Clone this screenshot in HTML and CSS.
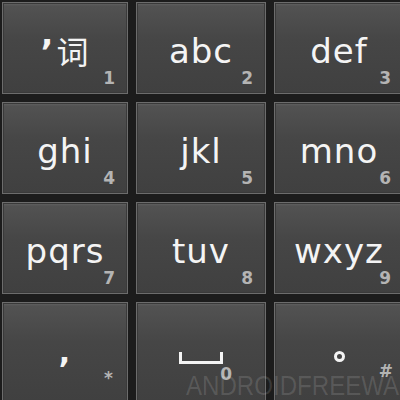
FILE: index.html
```html
<!DOCTYPE html>
<html>
<head>
<meta http-equiv="Content-Type" content="text/html; charset=utf-8"/>
<title>Keypad</title>
<link rel="stylesheet" href="styles.css">
</head>
<body>
<div class="pad">
  <div class="key"><span class="main"><span class="apos">’</span><span class="cjk">词</span></span><span class="num">1</span></div>
  <div class="key"><span class="main">abc</span><span class="num">2</span></div>
  <div class="key"><span class="main">def</span><span class="num">3</span></div>

  <div class="key"><span class="main">ghi</span><span class="num">4</span></div>
  <div class="key"><span class="main">jkl</span><span class="num">5</span></div>
  <div class="key"><span class="main">mno</span><span class="num">6</span></div>

  <div class="key"><span class="main">pqrs</span><span class="num">7</span></div>
  <div class="key"><span class="main">tuv</span><span class="num">8</span></div>
  <div class="key"><span class="main">wxyz</span><span class="num">9</span></div>

  <div class="key"><span class="main comma">,</span><span class="num star">*</span></div>
  <div class="key"><span class="space"></span><span class="num zero">0</span></div>
  <div class="key"><span class="dot"></span><span class="num hash">#</span></div>
</div>
<div class="mark">ANDROIDFREEWARE</div>
</body>
</html>
```

FILE: styles.css
```css
html, body {
  margin: 0;
  padding: 0;
  background-color: #1c1c1c;
  overflow: hidden;
}

body {
  width: 400px;
  height: 400px;
  position: relative;
  font-family: "DejaVu Sans", "Noto Sans CJK SC", sans-serif;
}

.pad {
  display: grid;
  grid-template-columns: 126px 130px 130px;
  grid-template-rows: 92px 92px 92px 100px;
  gap: 8px;
  padding: 2px 0 0 2px;
}

.key {
  position: relative;
  display: flex;
  align-items: center;
  justify-content: center;
  padding-top: 6px;
  box-sizing: border-box;
  background: linear-gradient(#535353, #464646 40%, #404040);
  border: 1px solid #6c6c6c;
  box-shadow: inset 0 0 0 1px #3a3a3a, inset 0 2px 2px rgba(255,255,255,0.08);
}

.main {
  color: #f4f4f4;
  font-size: 34px;
  line-height: 1;
  letter-spacing: 1px;
}

.apos {
  font-weight: bold;
  margin-right: 2px;
}

.cjk {
  font-family: "Noto Sans CJK SC", sans-serif;
  font-size: 32px;
}

.comma {
  font-weight: bold;
  font-size: 30px;
  margin-top: -4px;
}

.space {
  width: 38px;
  height: 9px;
  margin-top: 6px;
  border: 3px solid #f4f4f4;
  border-top: none;
}

.dot {
  width: 5px;
  height: 5px;
  margin-top: 2px;
  border: 3px solid #f4f4f4;
  border-radius: 50%;
}

.num {
  position: absolute;
  right: 12px;
  bottom: 6px;
  color: #b4b4b4;
  font-size: 17px;
  font-weight: bold;
  line-height: 1;
}

.star {
  right: 14px;
  bottom: 14px;
}

.zero {
  right: 33px;
  bottom: 18px;
}

.hash {
  right: 10px;
  bottom: 21px;
}

.mark {
  position: absolute;
  left: 186px;
  top: 372px;
  width: 250px;
  overflow: hidden;
  font-family: "Liberation Sans", sans-serif;
  font-size: 28px;
  line-height: 1;
  color: rgba(255, 255, 255, 0.13);
  transform: scaleX(0.86);
  transform-origin: left top;
  white-space: nowrap;
}
```
